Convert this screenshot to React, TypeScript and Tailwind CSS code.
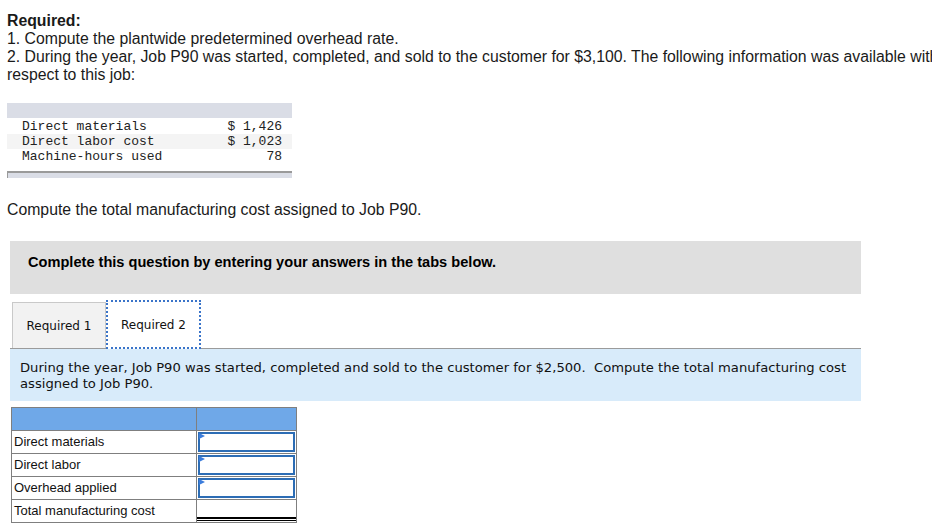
import React from "react";

const sans = { fontFamily: '"Liberation Sans", Arial, sans-serif' };
const verdana = { fontFamily: '"DejaVu Sans", Verdana, sans-serif' };
const mono = { fontFamily: '"Liberation Mono", "Courier New", monospace' };

function InputCell({ last }: { last?: boolean }) {
  if (last) {
    return (
      <div className="w-[100px] h-full bg-white border-l border-[#7f7f7f] relative">
        <div className="absolute left-0 right-0 bottom-[1px] h-[4px] border-t-2 border-b-[1.5px] border-black" />
      </div>
    );
  }
  return (
    <div className="w-[100px] h-full border-l border-[#7f7f7f] bg-white p-[1px]">
      <div className="relative w-full h-full border-2 border-[#2d6db5] bg-white">
        <svg className="absolute left-[-1px] top-[-1px]" width="7" height="7" viewBox="0 0 7 7">
          <polygon points="0,0 6,3 0,6" fill="#3b7ddc" />
        </svg>
      </div>
    </div>
  );
}

export default function App() {
  const rows = ["Direct materials", "Direct labor", "Overhead applied", "Total manufacturing cost"];
  return (
    <div className="w-[932px] h-[524px] overflow-hidden bg-white relative">
      <div
        className="w-[960px] pl-[7px] pt-[12px] text-[15.8px] leading-[18px] text-[#1a1a1a] whitespace-nowrap"
        style={sans}
      >
        <div className="font-bold">Required:</div>
        <div>1. Compute the plantwide predetermined overhead rate.</div>
        <div>
          2. During the year, Job P90 was started, completed, and sold to the customer for $3,100. The following
          information was available with
        </div>
        <div>respect to this job:</div>
      </div>

      <div className="ml-[7px] mt-[19px] w-[285px] text-[13px] text-[#222]" style={mono}>
        <div className="h-[15px] bg-[#dadde6]" />
        <div className="pt-[1px]">
          <div className="flex justify-between h-[15px] leading-[15px] pl-[15px] pr-[10px]">
            <span>Direct materials</span>
            <span>$ 1,426</span>
          </div>
          <div className="flex justify-between h-[15px] leading-[15px] pl-[15px] pr-[10px] bg-[#f4f4f4]">
            <span>Direct labor cost</span>
            <span>$ 1,023</span>
          </div>
          <div className="flex justify-between h-[15px] leading-[15px] pl-[15px] pr-[10px]">
            <span>Machine-hours used</span>
            <span>78</span>
          </div>
        </div>
        <div className="h-[7px]" />
        <div className="h-[7px] border-t-2 border-l border-[#9a9a9a] bg-[#dadde6]" />
      </div>

      <div className="pl-[7px] mt-[23px] text-[15.8px] leading-[18px] text-[#1a1a1a]" style={sans}>
        Compute the total manufacturing cost assigned to Job P90.
      </div>

      <div className="ml-[10px] mt-[22px] w-[851px] h-[53px] bg-[#dfdfdf] pl-[18px] pt-[9px]" style={sans}>
        <span className="font-bold text-[14.6px] leading-[18px] text-black">
          Complete this question by entering your answers in the tabs below.
        </span>
      </div>

      <div className="ml-[10px] mt-[7px] w-[851px]" style={verdana}>
        <div className="flex items-end h-[48px] border-b border-[#9b9b9b] pl-[2px]">
          <div className="w-[94px] h-[46px] bg-[#f2f2f2] border border-b-0 border-[#c9c9c9] flex items-center justify-center text-[12px] text-[#111]">
            Required 1
          </div>
          <div className="w-[95px] h-[49px] bg-white border-2 border-dotted border-[#3a74c9] mb-[-1px] flex items-center justify-center text-[12px] text-[#111]">
            Required 2
          </div>
        </div>
        <div className="bg-[#d8ebfa] h-[52px] pl-[10px] pt-[11px] text-[13.15px] leading-[16px] text-[#111] whitespace-nowrap">
          During the year, Job P90 was started, completed and sold to the customer for $2,500.&nbsp; Compute the total
          manufacturing cost
          <br />
          assigned to Job P90.
        </div>
      </div>

      <div className="ml-[11px] mt-[6px] w-[286px] border border-[#7f7f7f] text-[13px] text-[#111]" style={sans}>
        <div className="flex h-[22px] bg-[#6fa8e8]">
          <div className="w-[184px]" />
          <div className="w-[100px] border-l border-[#7f7f7f]" />
        </div>
        {rows.map((r, i) => (
          <div key={r} className="flex h-[23px] border-t border-[#7f7f7f]">
            <div className="w-[184px] pl-[2px] flex items-center bg-white">{r}</div>
            <InputCell last={i === 3} />
          </div>
        ))}
      </div>
    </div>
  );
}
